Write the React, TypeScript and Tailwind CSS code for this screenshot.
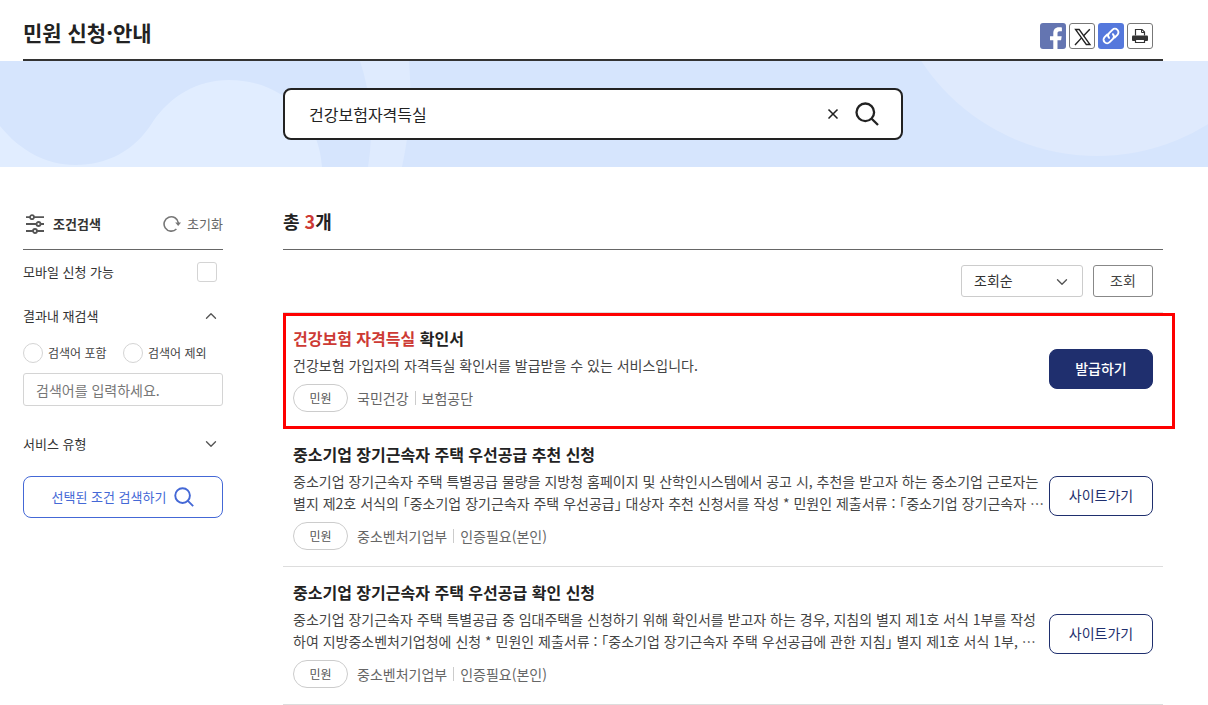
import React, { useState } from 'react';
import clsx from 'clsx';
import { ChevronDown, ChevronUp, X } from 'lucide-react';

interface Service {
  id: number;
  highlight?: string;
  title: string;
  lines: string[];
  tags: string[];
  action: string;
  primary?: boolean;
  marked?: boolean;
}

const services: Service[] = [
  {
    id: 1,
    highlight: '건강보험 자격득실',
    title: '확인서',
    lines: ['건강보험 가입자의 자격득실 확인서를 발급받을 수 있는 서비스입니다.'],
    tags: ['국민건강', '보험공단'],
    action: '발급하기',
    primary: true,
    marked: true,
  },
  {
    id: 2,
    title: '중소기업 장기근속자 주택 우선공급 추천 신청',
    lines: [
      '중소기업 장기근속자 주택 특별공급 물량을 지방청 홈페이지 및 산학인시스템에서 공고 시, 추천을 받고자 하는 중소기업 근로자는',
      '별지 제2호 서식의 「중소기업 장기근속자 주택 우선공급」 대상자 추천 신청서를 작성 * 민원인 제출서류 : 「중소기업 장기근속자 ⋯',
    ],
    tags: ['중소벤처기업부', '인증필요(본인)'],
    action: '사이트가기',
  },
  {
    id: 3,
    title: '중소기업 장기근속자 주택 우선공급 확인 신청',
    lines: [
      '중소기업 장기근속자 주택 특별공급 중 임대주택을 신청하기 위해 확인서를 받고자 하는 경우, 지침의 별지 제1호 서식 1부를 작성',
      '하여 지방중소벤처기업청에 신청 * 민원인 제출서류 : 「중소기업 장기근속자 주택 우선공급에 관한 지침」 별지 제1호 서식 1부, ⋯',
    ],
    tags: ['중소벤처기업부', '인증필요(본인)'],
    action: '사이트가기',
  },
];

const SearchIcon: React.FC<{ className?: string }> = ({ className }) => (
  <svg viewBox="0 0 24 24" fill="none" stroke="currentColor" strokeWidth="2.3" className={className}>
    <circle cx="10.3" cy="10.3" r="8.8" />
    <path d="M16.700 16.700l6.300 6.300" />
  </svg>
);

const FilterIcon = () => (
  <svg viewBox="0 0 20 20" fill="none" stroke="#555" strokeWidth="1.8" className="size-5">
    <path d="M1 3.200h4M9 3.200h10M1 10h10.500M15.500 10H19M1 17h7M12 17h7" />
    <circle cx="7" cy="3.200" r="2" />
    <circle cx="13.500" cy="10" r="2" />
    <circle cx="10" cy="17" r="2" />
  </svg>
);

const ResetIcon = () => (
  <svg viewBox="0 0 18 18" className="size-[18px]">
    <path d="M15.400 8A7.200 7.200 0 1 0 13.400 14" fill="none" stroke="#777" strokeWidth="1.600" />
    <path d="M12.200 7.400h5.800l-2.800 3.600z" fill="#777" />
  </svg>
);

const ShareLinks = () => (
  <div className="flex gap-[3px]">
    <a href="#facebook" aria-label="페이스북" className="block size-[26px] overflow-hidden rounded-[3px] bg-[#6475b1]">
      <svg viewBox="0 0 26 26" className="size-full">
        <path
          d="M13.300 26V17.200H10v-4h3.300V10.500c0-4 2-6.200 5.600-6.200 1.300 0 2.300.1 3 .2v3.700h-2.200c-1.700 0-2.200.9-2.200 2.200v2.800h4.200l-.6 4h-3.600V26z"
          fill="#fff"
        />
      </svg>
    </a>
    <a href="#x" aria-label="X" className="block size-[26px] rounded-[3px] border border-[#777]">
      <svg viewBox="0 0 24 24" className="size-full">
        <path d="M5.500 5.500h3.700l10.800 15h-3.700z" fill="#fff" stroke="#222" strokeWidth="1.300" />
        <path d="M19.800 5.200l-6.400 6.900M11.300 14.100l-6.300 6.900" stroke="#222" strokeWidth="1.400" />
      </svg>
    </a>
    <a href="#link" aria-label="링크 복사" className="block size-[26px] rounded-[3px] bg-[#5578dc]">
      <svg viewBox="0 0 26 26" fill="none" stroke="#fff" strokeWidth="1.900" strokeLinecap="round" className="size-full">
        <path d="M11.100 14.900a3.400 3.400 0 0 1 0-4.700l3.300-3.400a3.500 3.500 0 0 1 5 5l-2.700 2.700" />
        <path d="M14.900 11.100a3.400 3.400 0 0 1 0 4.700l-3.300 3.400a3.500 3.500 0 0 1-5-5l2.700-2.700" />
      </svg>
    </a>
    <button type="button" aria-label="인쇄" className="block size-[26px] rounded-[3px] border border-[#777]">
      <svg viewBox="0 0 24 24" className="size-full">
        <path d="M7.500 11.500V5.500h6.500l2.500 2.500v3.500" fill="#fff" stroke="#333" strokeWidth="1.200" />
        <path d="M13.500 5.500v3h3" fill="none" stroke="#333" />
        <rect x="4" y="11.500" width="16" height="5.500" rx="1" fill="#333" />
        <path d="M7.500 15.500h9v3h-9z" fill="#fff" stroke="#333" strokeWidth="1.200" />
      </svg>
    </button>
  </div>
);

const BannerShapes = () => (
  <svg viewBox="0 0 1208 106" preserveAspectRatio="xMidYMid slice" className="absolute inset-0 size-full" aria-hidden="true">
    <path d="M0 65C20 90 47 104 75 104C108 104 135 89 152 62C170 35 197 19 229 19C283 19 319 57 322 106H0z" fill="#e1edff" />
    <path d="M360 0C371 33 374 70 368 106H402C410 70 412 35 409 0z" fill="#dfebfe" />
    <circle cx="1097" cy="-115" r="210" fill="#dfeafd" />
  </svg>
);

const SearchBanner = () => {
  const [keyword, setKeyword] = useState('건강보험자격득실');

  return (
    <div className="relative bg-[#d6e5fd] py-[27px] pr-[45px] pl-[23px]">
      <BannerShapes />
      <form
        onSubmit={(e) => e.preventDefault()}
        className="relative mx-auto flex h-[52px] max-w-[620px] items-center rounded-lg border-2 border-[#222] bg-white pr-[22px] pl-6"
      >
        <input
          type="text"
          aria-label="검색어"
          value={keyword}
          onChange={(e) => setKeyword(e.target.value)}
          className="min-w-0 flex-1 text-base text-[#222] outline-none"
        />
        <button type="button" aria-label="지우기" onClick={() => setKeyword('')} className="mr-[14px]">
          <X className="size-4 text-[#222]" strokeWidth={2.5} />
        </button>
        <button type="submit" aria-label="검색">
          <SearchIcon className="size-6 text-[#222]" />
        </button>
      </form>
    </div>
  );
};

const Sidebar = () => (
  <aside className="w-[200px] shrink-0 text-[13px] text-[#333]">
    <div className="flex h-[51px] items-center justify-between border-b border-[#666]">
      <h2 className="flex items-center gap-2 pl-[2px] text-[13px] font-bold">
        <FilterIcon />
        조건검색
      </h2>
      <button type="button" className="flex items-center gap-[6px] text-[#666]">
        <ResetIcon />
        초기화
      </button>
    </div>
    <div className="flex h-11 items-center justify-between pr-[6px]">
      <label htmlFor="mobile">모바일 신청 가능</label>
      <input id="mobile" type="checkbox" className="size-5 appearance-none rounded-[3px] border border-[#d4d4d4] checked:bg-[#4a6fdc]" />
    </div>
    <button type="button" className="flex h-11 w-full items-center justify-between pr-[3px]">
      결과내 재검색
      <ChevronUp className="size-[18px] text-[#555]" strokeWidth={1.8} />
    </button>
    <div className="mt-[5px] grid grid-cols-2 text-xs text-[#444]">
      <label className="flex items-center gap-[5px]">
        <input type="radio" name="scope" className="size-5 appearance-none rounded-full border border-[#d4d4d4] checked:border-[6px]" />
        검색어 포함
      </label>
      <label className="flex items-center gap-[5px]">
        <input type="radio" name="scope" className="size-5 appearance-none rounded-full border border-[#d4d4d4] checked:border-[6px]" />
        검색어 제외
      </label>
    </div>
    <input
      type="text"
      aria-label="재검색어"
      placeholder="검색어를 입력하세요."
      className="mt-[10px] h-[33px] w-full rounded-[3px] border border-[#d4d4d4] px-3 text-sm outline-none placeholder:text-[#777]"
    />
    <button type="button" className="mt-4 flex h-11 w-full items-center justify-between pr-[3px]">
      서비스 유형
      <ChevronDown className="size-[18px] text-[#555]" strokeWidth={1.8} />
    </button>
    <button
      type="button"
      className="mt-[10px] flex h-[42px] w-full items-center justify-center gap-2 rounded-lg border border-[#4468d6] text-[13px] text-[#4468d6]"
    >
      선택된 조건 검색하기
      <SearchIcon className="size-5" />
    </button>
  </aside>
);

const ServiceItem: React.FC<{ service: Service }> = ({ service }) => (
  <li className="relative flex items-center border-b border-[#ddd] px-[10px] pt-[13px] pb-4">
    {service.marked && <div className="pointer-events-none absolute top-0 -right-3 -bottom-px left-0 border-[3px] border-[#fe0000]" />}
    <div className="min-w-0 flex-1">
      <h3 className="text-base leading-6 font-bold text-[#222]">
        {service.highlight && <span className="text-[#cd3a34]">{service.highlight} </span>}
        {service.title}
      </h3>
      <p className="mt-1 text-sm leading-[22px] text-[#444] [font-feature-settings:'halt']">
        {service.lines.map((line) => (
          <span key={line} className="block whitespace-nowrap">
            {line}
          </span>
        ))}
      </p>
      <div className="mt-2 flex h-7 items-center text-sm text-[#666]">
        <span className="mr-[9px] flex h-7 w-[55px] items-center justify-center rounded-full border border-[#ccc] text-xs text-[#555]">
          민원
        </span>
        <span>{service.tags[0]}</span>
        <span className="mx-[6px] h-[14px] w-px bg-[#ccc]" />
        <span>{service.tags[1]}</span>
      </div>
    </div>
    <button
      type="button"
      className={clsx(
        'flex h-10 w-[104px] shrink-0 items-center justify-center self-center rounded-lg border border-[#1f2f6e] pb-[2px] text-sm',
        service.primary ? 'bg-[#1f2f6e] font-medium text-white' : 'bg-white text-[#1f2f6e]'
      )}
    >
      {service.action}
    </button>
  </li>
);

const App = () => {
  return (
    <div lang="ko" className="overflow-x-hidden bg-white font-['Noto_Sans_CJK_KR',sans-serif] text-[#222]">
      <header className="pr-[45px] pl-[23px]">
        <div className="flex h-[61px] items-center justify-between border-b-2 border-[#333] pt-3 pr-[10px]">
          <h1 className="pb-2 text-[21px] leading-8 font-bold">민원 신청·안내</h1>
          <ShareLinks />
        </div>
      </header>
      <SearchBanner />
      <div className="flex gap-[60px] pt-8 pr-[45px] pl-[23px]">
        <Sidebar />
        <main className="min-w-0 flex-1">
          <h2 className="flex h-[51px] items-center border-b border-[#666] pb-[6px] text-lg font-bold">
            <span>
              총 <span className="text-[#cd3a34]">3</span>개
            </span>
          </h2>
          <div className="flex justify-end gap-[10px] py-[15px] pr-[10px] text-sm">
            <div className="relative">
              <select
                aria-label="정렬"
                className="h-8 w-[122px] appearance-none rounded-[3px] border border-[#ccc] bg-white pb-[2px] pl-3 text-[#333] outline-none"
              >
                <option>조회순</option>
                <option>최신순</option>
              </select>
              <ChevronDown className="pointer-events-none absolute top-2 right-3 size-[18px] text-[#555]" strokeWidth={1.8} />
            </div>
            <button type="button" className="h-8 w-[60px] rounded-[3px] border border-[#888] pb-[2px] text-[#444]">
              조회
            </button>
          </div>
          <ul className="border-t border-[#ddd]">
            {services.map((service) => (
              <ServiceItem key={service.id} service={service} />
            ))}
          </ul>
        </main>
      </div>
    </div>
  );
};

export default App;
